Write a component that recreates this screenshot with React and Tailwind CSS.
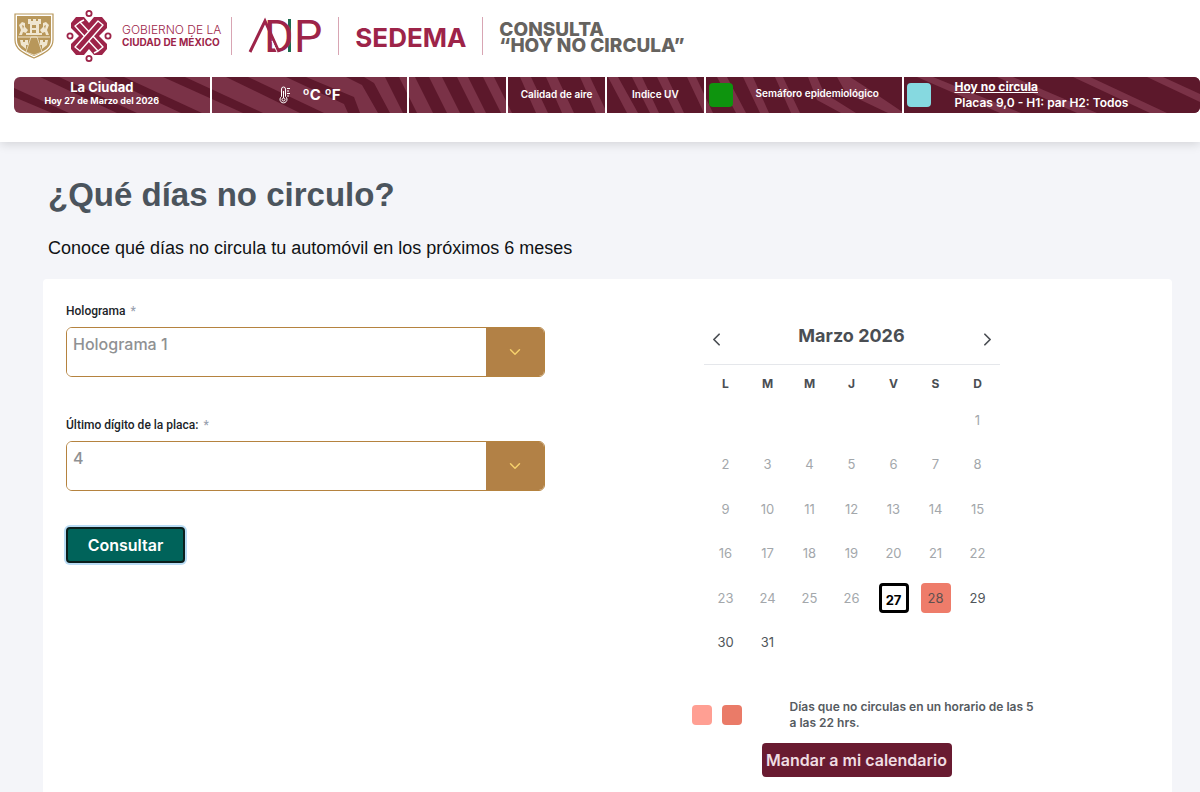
import { useState } from 'react';
import { ChevronDown, ChevronLeft, ChevronRight } from 'lucide-react';

const WEEKDAYS = ['L', 'M', 'M', 'J', 'V', 'S', 'D'];

// March 2026 starts on a Sunday
const WEEKS = [
  [null, null, null, null, null, null, 1],
  [2, 3, 4, 5, 6, 7, 8],
  [9, 10, 11, 12, 13, 14, 15],
  [16, 17, 18, 19, 20, 21, 22],
  [23, 24, 25, 26, 27, 28, 29],
  [30, 31, null, null, null, null, null],
];

const TODAY = 27;
const NO_CIRCULA = [28];

const HOLOGRAMAS = ['Holograma 00', 'Holograma 0', 'Holograma 1', 'Holograma 2'];
const DIGITOS = ['0', '1', '2', '3', '4', '5', '6', '7', '8', '9'];

function Escudo() {
  return (
    <svg viewBox="0 0 40 46" className="mr-0.5 h-[46px] w-10 shrink-0" aria-hidden="true">
      <path d="M1 1h38v26c0 9-8 13-19 18C9 40 1 36 1 27z" fill="#fff" stroke="#b8975a" strokeWidth="1.2" />
      <path d="M3 3h34v24c0 8-7 11-17 16C10 38 3 35 3 27z" fill="#b8975a" />
      <g fill="#f0e6d0">
        <path d="M14 6h3v2h2V6h3v2h2V6h3v5h-2v9h3v2H12v-2h4v-9h-2z" />
        <path d="M5 12l3-3 3 1v4l3 3-2 3-3-1-1 3H5l2-5zM35 12l-3-3-3 1v4l-3 3 2 3 3-1 1 3h3l-2-5z" />
        <path d="M6 27h3v2h2v-2h3v5h-2v4l-5-4zM34 27h-3v2h-2v-2h-3v5h2v4l5-4z" />
      </g>
      <g fill="#b8975a">
        <path d="M18 12h4v3h-4zM18 17h4v3h-4z" />
        <path d="M8 12l2 1-1 3zM32 12l-2 1 1 3z" />
      </g>
      <path d="M17 24h6l5 15-8 3-8-3z" fill="#b8975a" stroke="#f0e6d0" strokeWidth="0.8" />
      <path d="M4 24h32" stroke="#f0e6d0" strokeWidth="1" />
    </svg>
  );
}

function CdmxMark() {
  return (
    <svg viewBox="0 0 46 54" className="h-[54px] w-[46px] shrink-0" aria-hidden="true">
      <g fill="none" stroke="#9d2449" strokeWidth="1.8">
        <circle cx="23" cy="4.500" r="2.600" />
        <circle cx="23" cy="49.500" r="2.600" />
        <circle cx="4" cy="27" r="2.600" />
        <circle cx="42" cy="27" r="2.600" />
      </g>
      <path d="M10 8h8l5 6 5-6h8l5 6v5l-8 8 8 8v5l-5 6h-8l-5-6-5 6h-8l-5-6v-5l8-8-8-8v-5z" fill="#9d2449" />
      <g fill="#9d2449" stroke="#fff" strokeWidth="1.400" strokeLinejoin="round">
        <path d="M9 17l5-4 23 25-5 4z" />
        <path d="M32 12l5 4-23 26-5-4z" />
      </g>
      <path d="M14 13l4-2M32 42l-4 2" stroke="#fff" strokeWidth="1.400" />
    </svg>
  );
}

function AdipMark() {
  return (
    <svg viewBox="0 -10 74 58" className="h-[58px] w-[74px] shrink-0" role="img" aria-label="ADIP">
      <rect x="40" y="2" width="3" height="33" fill="#1c6b50" />
      <g fill="#9d2449" fontFamily="Roboto, sans-serif" fontSize="45">
        <text x="16" y="35">D</text>
        <text x="46" y="35">P</text>
      </g>
      <path d="M2 35L17 4l14 31" stroke="#9d2449" strokeWidth="3" fill="none" />
      <path d="M24 24l5 11" stroke="#fff" strokeWidth="1" />
    </svg>
  );
}

function Divider() {
  return <span className="h-[38px] w-px shrink-0 bg-[#d8a5b3]" />;
}

function Thermometer() {
  return (
    <svg viewBox="0 0 12 18" className="h-[18px] w-3" fill="none" stroke="#fff" strokeWidth="1" aria-hidden="true">
      <path d="M2.500 10.500V3a2 2 0 0 1 4 0v7.500a3.500 3.500 0 1 1-4 0z" />
      <path d="M4.500 5v7" />
      <circle cx="4.500" cy="13.500" r="1.500" />
      <path d="M8 2.500h3M8 5h2M8 7.500h3M8 10h2" />
    </svg>
  );
}

// Diagonal ribbons behind the status bar
function Ribbons() {
  return (
    <svg viewBox="0 0 1186 36" preserveAspectRatio="none" className="absolute inset-0 h-full w-full" aria-hidden="true">
      <rect width="1186" height="36" fill="#7a3247" />
      <g fill="#5c182b">
        <path d="M0 11L55 36H38L0 20z" />
        <path d="M26 0h19l78 36h-20z" />
        <path d="M90 0h20l78 36h-21z" />
        <path d="M149 0h22l78 36h-20z" />
        <path d="M212 0h22l76 36h-24z" />
        <path d="M272 0h20l48 20 6 16h-12l-4-9z" />
        <path d="M332 0h18l10 6 16 30h-12L348 8z" />
        <path d="M371 0h14l18 36h-14z" />
        <path d="M401 0h14l18 36h-14z" />
        <path d="M428 0h15l18 36h-15z" />
        <path d="M454 0h15l18 36h-15z" />
        <path d="M480 0h706v36H498z" />
      </g>
      <g fill="#7a3247">
        <path d="M506 0h11l17 36h-12z" />
        <path d="M532 0h11l17 36h-12z" />
        <path d="M566 0h10l17 36h-11z" />
        <path d="M594 0h10l20 36h-11z" />
        <path d="M618 0h10l17 36h-9z" />
        <path d="M643 0h10l17 36h-9z" />
        <path d="M673 0h9l17 36h-9z" />
        <path d="M703 0h10l19 36h-10z" />
        <path d="M729 0h10l16 36h-9z" />
        <path d="M761 0h8l17 36h-9z" />
        <path d="M794 0h9l7 16 32 20h-15l-24-13z" />
        <path d="M823 0h13l14 9 40 27h-16l-42-20z" />
        <path d="M903 0h16l88 36h-21z" />
        <path d="M983 0h16l84 36h-20z" />
        <path d="M1059 0h17l77 36h-17z" />
        <path d="M1133 0h16l37 17v8z" />
      </g>
    </svg>
  );
}

function StatusBar() {
  return (
    <div className="relative ml-3.5 mt-2.5 h-9 overflow-hidden rounded-md text-[10px] font-semibold text-white">
      <Ribbons />
      <div className="relative grid h-full grid-cols-12 divide-x-2 divide-white">
        <div className="col-span-2 flex flex-col items-center justify-center pr-5 pb-1">
          <p className="text-[13px] leading-4 font-bold">La Ciudad</p>
          <p className="text-[9px] leading-3 font-bold">Hoy 27 de Marzo del 2026</p>
        </div>
        <div className="col-span-2 flex items-center justify-center gap-3">
          <Thermometer />
          <p className="text-[15px] font-bold">ºC ºF</p>
        </div>
        <div />
        <div className="flex items-center justify-center pb-0.5">Calidad de aire</div>
        <div className="flex items-center justify-center pb-0.5">Indice UV</div>
        <div className="col-span-2 flex items-center pl-[3px]">
          <span className="size-6 rounded bg-[#0e940e]" />
          <p className="flex-1 pb-1 text-center">Semáforo epidemiológico</p>
        </div>
        <div className="col-span-3 flex items-center gap-6 pl-[3px]">
          <span className="size-6 rounded bg-[#86d9e0]" />
          <div className="text-[12px] leading-4">
            <a href="#hoy-no-circula" className="font-bold underline">Hoy no circula</a>
            <p>Placas 9,0 - H1: par H2: Todos</p>
          </div>
        </div>
      </div>
    </div>
  );
}

function Header() {
  return (
    <header className="relative bg-white pb-[29px] shadow-[0_2px_10px_rgba(0,0,0,0.14)]">
      <div className="flex h-[67px] items-center gap-4 pt-1 pl-3.5">
        <div className="flex items-center gap-2.5">
          <Escudo />
          <CdmxMark />
          <div className="text-[#9d2449]">
            <p className="text-[12px] leading-3 font-light">GOBIERNO DE LA</p>
            <p className="text-[10px] leading-3 font-bold">CIUDAD DE MÉXICO</p>
          </div>
          <Divider />
        </div>
        <AdipMark />
        <Divider />
        <p className="pt-1 text-[26px] font-bold text-[#9d2449]">SEDEMA</p>
        <Divider />
        <div className="pt-1 text-[19px] leading-4 font-extrabold text-[#66635f]">
          <p>CONSULTA</p>
          <p>“HOY NO CIRCULA”</p>
        </div>
      </div>
      <StatusBar />
    </header>
  );
}

function SelectField({ id, label, value, options, onChange }) {
  return (
    <div>
      <label htmlFor={id} className="block font-['Roboto',sans-serif] text-[12px] leading-4 font-medium text-[#202428]">
        {label} <span className="pl-0.5 text-gray-400">*</span>
      </label>
      <div className="mt-2 flex h-[50px] overflow-hidden rounded-md border border-[#b5833f]">
        <select
          id={id}
          value={value}
          onChange={(e) => onChange(e.target.value)}
          className="min-w-0 flex-1 appearance-none bg-white pb-4 pl-1.5 text-[16px] font-medium text-[#8f9193] outline-none"
        >
          {options.map((o) => (
            <option key={o} value={o}>{o}</option>
          ))}
        </select>
        <span className="pointer-events-none flex w-[58px] items-center justify-center bg-[#b28146]">
          <ChevronDown size={18} color="#f5cf6b" />
        </span>
      </div>
    </div>
  );
}

function Day({ day }) {
  if (!day) return null;
  if (day === TODAY) {
    return (
      <span className="mx-auto flex size-[30px] items-end justify-center rounded-sm border-3 border-black leading-5 font-bold text-black">
        {day}
      </span>
    );
  }
  if (NO_CIRCULA.includes(day)) {
    return (
      <span className="mx-auto flex size-[30px] items-center justify-center rounded-sm bg-[#ee7c6a] text-[#60504f]">
        {day}
      </span>
    );
  }
  return <span className={day < TODAY ? 'text-[#a3a7ab]' : 'text-[#50555a]'}>{day}</span>;
}

function Calendar() {
  return (
    <div className="ml-3 w-[296px] text-[#4a4e53]">
      <div className="flex h-[50px] items-center justify-between border-b border-gray-200 px-0.5">
        <button type="button" aria-label="Mes anterior"><ChevronLeft size={21} /></button>
        <h2 className="pb-2 text-[18px] font-bold">Marzo 2026</h2>
        <button type="button" aria-label="Mes siguiente"><ChevronRight size={21} /></button>
      </div>
      <table className="mx-auto h-[300px] w-[294px] table-fixed text-center text-[13px]">
        <thead>
          <tr className="h-[33px] text-[12px]">
            {WEEKDAYS.map((d, i) => (
              <th key={i} className="pt-1 font-bold">{d}</th>
            ))}
          </tr>
        </thead>
        <tbody>
          {WEEKS.map((week, i) => (
            <tr key={i} className="h-11">
              {week.map((day, j) => (
                <td key={j}><Day day={day} /></td>
              ))}
            </tr>
          ))}
        </tbody>
      </table>
    </div>
  );
}

export default function App() {
  const [holograma, setHolograma] = useState('Holograma 1');
  const [digito, setDigito] = useState('4');

  return (
    <div className="h-screen overflow-hidden bg-[#f4f5f9] font-['Inter',sans-serif]">
      <Header />

      <main className="mr-7 ml-[43px]">
        <div className="pt-[33px] pl-[5px] font-['Liberation_Sans',sans-serif]">
          <h1 className="text-[33px] leading-10 font-bold text-[#4b545d]">¿Qué días no circulo?</h1>
          <p className="mt-[19px] text-[18px] leading-7 text-[#101214]">
            Conoce qué días no circula tu automóvil en los próximos 6 meses
          </p>
        </div>

        <section className="mt-[17px] grid min-h-screen grid-cols-2 content-start rounded-sm bg-white">
          <form className="pt-6 pl-[23px]" onSubmit={(e) => e.preventDefault()}>
            <div className="max-w-[479px] space-y-10">
              <SelectField id="holograma" label="Holograma" value={holograma} options={HOLOGRAMAS} onChange={setHolograma} />
              <SelectField id="digito" label="Último dígito de la placa:" value={digito} options={DIGITOS} onChange={setDigito} />
            </div>
            <button
              type="submit"
              className="mt-9 h-9 w-[119px] rounded border-2 border-[#0b1f1c] bg-[#00635a] text-[16px] font-semibold text-white ring-2 ring-[#b9dcf5]"
            >
              Consultar
            </button>
          </form>

          <div className="pt-9 pl-[84px]">
            <Calendar />
            <div className="mt-[34px] flex items-center">
              <span className="size-5 rounded-sm bg-[#ff9f93]" />
              <span className="ml-2.5 size-5 rounded-sm bg-[#ea7b68]" />
              <p className="ml-12 w-[250px] text-[12px] leading-4 font-semibold text-[#565b61]">
                Días que no circulas en un horario de las 5 a las 22 hrs.
              </p>
            </div>
            <button
              type="button"
              className="mt-3 ml-[70px] h-[34px] w-[190px] rounded-sm bg-[#691b31] text-[16px] font-semibold text-[#efdde2]"
            >
              Mandar a mi calendario
            </button>
          </div>
        </section>
      </main>
    </div>
  );
}
